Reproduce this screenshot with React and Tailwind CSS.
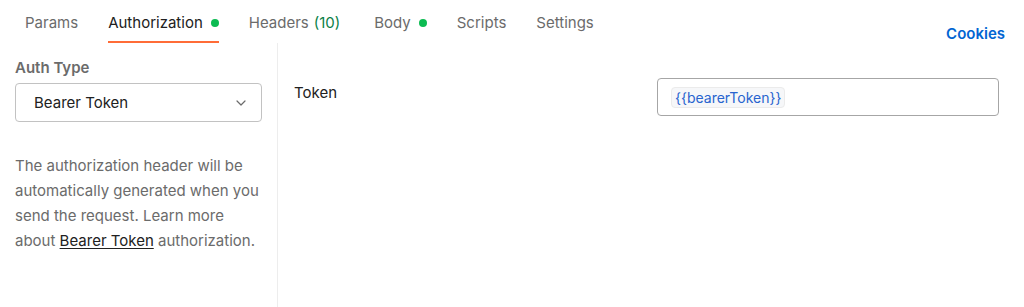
import React from "react";

const tabs = [
  { label: "Params" },
  { label: "Authorization", active: true, dot: true },
  { label: "Headers", count: "(10)" },
  { label: "Body", dot: true },
  { label: "Scripts" },
  { label: "Settings" },
];

export default function App() {
  return (
    <div className="w-[1024px] h-[307px] bg-white overflow-hidden font-['Inter',sans-serif] text-[15px]">
      {/* Tab bar */}
      <div className="flex items-end h-[43px] pl-[25px] pr-[19px]">
        <div className="flex gap-[30px] h-full">
          {tabs.map((t) => (
            <div
              key={t.label}
              className={`flex items-center gap-[8px] h-full pt-[5px] border-b-[2px] ${
                t.active ? "border-[#ff6c37] text-[#212121]" : "border-transparent text-[#6b6b6b]"
              } ${t.count ? "mr-[4px]" : ""}`}
            >
              <span>{t.label}</span>
              {t.count && <span className="text-[#0b7f48] -ml-[3px]">{t.count}</span>}
              {t.dot && <span className="w-[8px] h-[8px] rounded-full bg-[#0cbb52]" />}
            </div>
          ))}
        </div>
        <div className="ml-auto self-start pt-[23px] text-[#0265d2] font-semibold">Cookies</div>
      </div>

      <div className="flex h-[264px]">
        {/* Left panel */}
        <div className="w-[278px] border-r border-[#ededed] pl-[15px] pr-[15px] pt-[15px]">
          <div className="font-semibold text-[#6b6b6b] leading-[20px]">Auth Type</div>
          <div className="mt-[5px] w-[247px] h-[39px] border border-[#c2c2c2] rounded-[4px] flex items-center pl-[18px] pr-[12px] pt-[1px] text-[#212121]">
            <span>Bearer Token</span>
            <svg className="ml-auto" width="16" height="16" viewBox="0 0 16 16" fill="none">
              <path d="M4 6l4 4 4-4" stroke="#6b6b6b" strokeWidth="1.2" strokeLinecap="round" strokeLinejoin="round" />
            </svg>
          </div>
          <p className="mt-[31px] text-[#6b6b6b] leading-[25px] w-[250px]">
            The authorization header will be automatically generated when you send the request. Learn more about{" "}
            <span className="text-[#212121] underline underline-offset-2">Bearer Token</span> authorization.
          </p>
        </div>

        {/* Right panel */}
        <div className="flex-1 flex items-start pt-[35px] pl-[16px] pr-[25px]">
          <div className="text-[#212121] pt-[4px]">Token</div>
          <div className="ml-auto w-[342px] h-[38px] border border-[#a6a6a6] rounded-[4px] flex items-center pl-[13px]">
            <span className="px-[3px] h-[21px] leading-[20px] text-[14px] rounded-[4px] bg-[#f6f7f9] border border-[#ebebeb] text-[#2864cf]">
              {"{{bearerToken}}"}
            </span>
          </div>
        </div>
      </div>
    </div>
  );
}
